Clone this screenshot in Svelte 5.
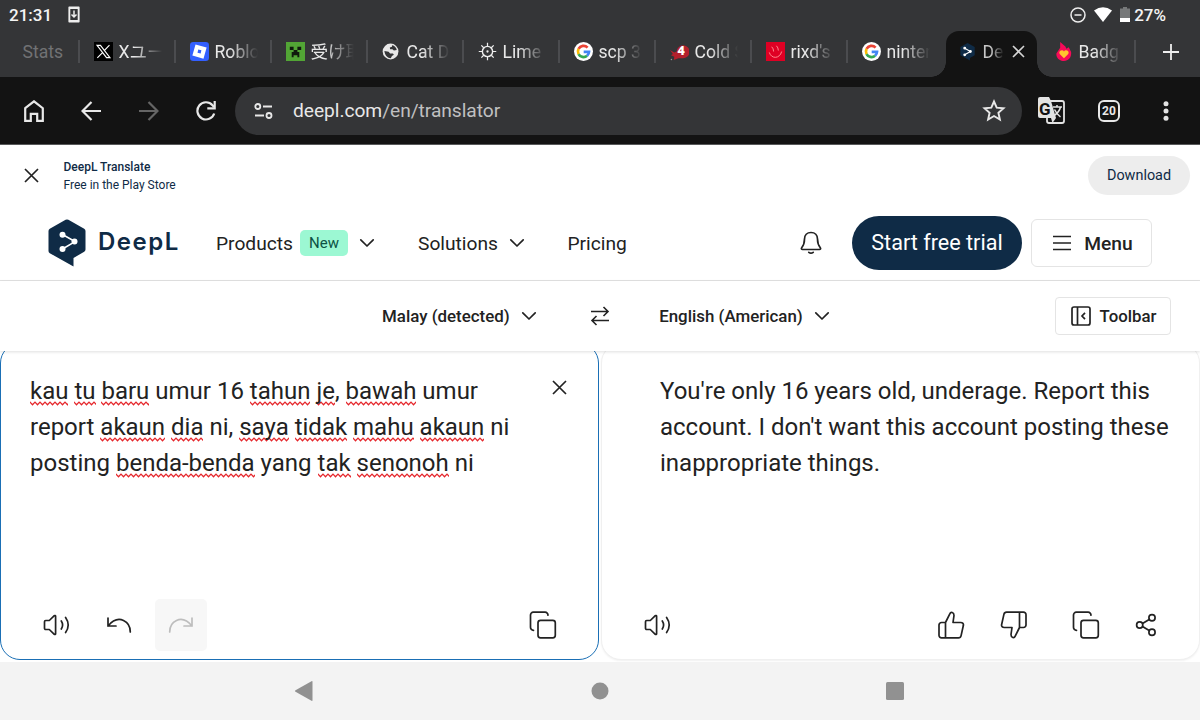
<script lang="ts">
	type Tab = { icon: string; label: string; active?: boolean };

	const tabs: Tab[] = [
		{ icon: "x", label: "Xユー" },
		{ icon: "roblox", label: "Roblo" },
		{ icon: "creeper", label: "受け取" },
		{ icon: "globe", label: "Cat D" },
		{ icon: "lime", label: "Lime" },
		{ icon: "google", label: "scp 3" },
		{ icon: "cold", label: "Cold S" },
		{ icon: "rixd", label: "rixd's" },
		{ icon: "google", label: "ninten" },
		{ icon: "deepl", label: "De", active: true },
		{ icon: "flame", label: "Badg" },
	];

	// odd entries are flagged by the spell checker
	const source: string[][] = [
		["", "kau", " ", "tu", " ", "baru", " umur 16 ", "tahun", " ", "je", ", ", "bawah", " umur"],
		["report ", "akaun", " ", "dia", " ni, ", "saya", " ", "tidak", " ", "mahu", " ", "akaun", " ni"],
		["posting ", "benda-benda", " yang ", "tak", " ", "senonoh", " ni"],
	];
	const translation = [
		"You're only 16 years old, underage. Report this",
		"account. I don't want this account posting these",
		"inappropriate things.",
	];
</script>

{#snippet favicon(name: string)}
	<svg class="favicon" viewBox="0 0 20 20">
		{#if name === "x"}
			<rect width="20" height="20" fill="#000" />
			<path d="M3.2 3.5h3.6l10 13h-3.6zM16.3 3.3l-5.8 6.1M9 11.2l-5.5 5.5" fill="none" stroke="#fff" stroke-width="1.2" />
		{:else if name === "roblox"}
			<rect width="20" height="20" rx="3.5" fill="#335fff" />
			<path d="M5.8 2.5l11.7 3.3-3.3 11.7-11.7-3.3zM8.7 8l-.8 3.3 3.3.8.8-3.3z" fill="#fff" fill-rule="evenodd" />
		{:else if name === "creeper"}
			<rect width="20" height="20" fill="#52a535" />
			<path d="M4 5h4v3.5H4zM12 5h4v3.5h-4zM8 8.5h4v2h2V16h-2v-2H8v2H6v-5.5h2z" fill="#101b0d" />
		{:else if name === "globe"}
			<circle cx="9" cy="10" r="8.3" fill="#e8e8e8" />
			<path d="M10.500 3.500c3 .5 4.500 2.500 5 5l-3 .5-1.500-1.500H8.500l-.3-1.800 2.300-.7zM2.500 9.500l4.500.7 1.500 2h3l1 1.300-2 1.200-1.300 2.500C6 17 3 14 2.500 9.500z" fill="#343537" />
		{:else if name === "lime"}
			<circle cx="10" cy="10" r="5.4" fill="none" stroke="#eee" stroke-width="1.5" />
			<circle cx="10" cy="10" r="1.2" fill="#eee" />
			<path d="M10 .8v4M10 15.200v4M.8 10h4M15.200 10h4M3.500 3.500l2.500 2.500M14 14l2.500 2.500M16.500 3.500L14 6M3.500 16.500L6 14" stroke="#eee" stroke-width="1.3" />
		{:else if name === "google"}
			<circle cx="10" cy="10" r="10" fill="#fff" />
			<g fill="none" stroke-width="2.9">
				<path d="M14.300 5.900A5.900 5.900 0 0 0 4.800 7.300" stroke="#ea4335" />
				<path d="M4.800 7.300a5.900 5.900 0 0 0 0 5.400" stroke="#fbbc05" />
				<path d="M4.800 12.700a5.900 5.900 0 0 0 9 1.800" stroke="#34a853" />
				<path d="M13.800 14.500A5.900 5.900 0 0 0 15.800 10.300H10.200" stroke="#4285f4" />
			</g>
		{:else if name === "cold"}
			<path d="M0 8.500l4.500 2.500 2.500-1a6.800 6.800 0 1 1 6 7L9 17l-5 2 .5-3.500L1 14l2-1.500z" fill="#b3202c" />
			<circle cx="1.500" cy="18.500" r=".8" fill="#999" />
			<text x="7.500" y="14" fill="#fff" font-size="14" font-weight="900">4</text>
		{:else if name === "rixd"}
			<rect width="20" height="20" fill="#df0024" />
			<path d="M6 5q2 2 2 5M11 4q2 2 2 5M3.500 11c2 7 11 7 13-1" fill="none" stroke="#ff8d91" stroke-width="1" />
		{:else if name === "deepl"}
			<path d="M9 1l7.500 4.300V14l-5 2.800v2.700L1.500 14V5.300z" fill="#0f2b46" />
			<path d="M6 6.500l6 3.500-6 3.500" fill="none" stroke="#fff" stroke-width="1.2" />
			<path d="M4.500 6.500a1.500 1.500 0 1 0 3 0 1.500 1.500 0 1 0-3 0M10.500 10a1.500 1.500 0 1 0 3 0 1.500 1.500 0 1 0-3 0M4.500 13.500a1.500 1.500 0 1 0 3 0 1.500 1.500 0 1 0-3 0" fill="#fff" />
		{:else}
			<path d="M6.500 0L12 4.800l1 2.200L15.500 5.500l2.500 5c.8 5.500-3 9.500-7.500 9.500S2 16.500 2.500 12L6.500 6z" fill="#f80a59" />
			<path d="M10.500 17L6 12.500a2.500 2.500 0 0 1 4.500-2.400A2.500 2.500 0 0 1 15 12.500z" fill="#ffc42e" />
		{/if}
	</svg>
{/snippet}

{#snippet chevron()}
	<svg class="chevron" width="16" height="10" viewBox="0 0 16 10"><path d="M1.800 1.800L8 8l6.200-6.200" /></svg>
{/snippet}

{#snippet speaker()}
	<svg width="28" height="28" viewBox="0 0 28 28">
		<path d="M2.700 9.500h3.600l5-4.800c.5-.4 1.300-.1 1.300.6v17.400c0 .7-.8 1-1.300.6l-5-4.800H2.700c-.7 0-1.200-.5-1.200-1.200v-6.600c0-.7.5-1.200 1.200-1.200M18.300 10q2.600 4 0 8M22.600 6.500q5.200 7.500 0 15" />
	</svg>
{/snippet}

{#snippet copy()}
	<svg width="28" height="28" viewBox="0 0 28 28">
		<rect x="9" y="9.300" width="17.300" height="17.500" rx="2.500" />
		<path d="M4.500 19.300a2.900 2.900 0 0 1-3-3V4a2.800 2.800 0 0 1 2.800-2.800h11.700a2.900 2.900 0 0 1 3 3" />
	</svg>
{/snippet}

{#snippet thumb()}
	<svg width="28" height="28" viewBox="0 0 28 28">
		<path d="M8.500 11.500v15.300H4.500a2.500 2.500 0 0 1-2.500-2.500V14a2.500 2.500 0 0 1 2.500-2.500h4L12.800 2.900c.9-2.400 4.200-1.900 4.200 1.600l-1 7h7.700c2 0 3 1.200 2.700 2.800l-2.300 10.300a2.800 2.800 0 0 1-2.700 2.200H8.500" />
	</svg>
{/snippet}

<div class="screen">
	<header class="browser">
		<div class="status">
			<span>21:31</span>
			<svg class="saver" width="12" height="17" viewBox="0 0 12 17">
				<path d="M1.200.5h9.600q.8 0 .8.8v14.400q0 .8-.8.8H1.200q-.8 0-.8-.8V1.300q0-.8.8-.8zM2.300 3v11h7.400V3z" fill="#eee" fill-rule="evenodd" />
				<path d="M6 4.500v6M3.500 8.500L6 11l2.500-2.500" fill="none" stroke="#eee" stroke-width="1.5" />
			</svg>
			<div class="status-right">
				<svg width="16" height="16" viewBox="0 0 16 16" fill="none" stroke="#eee" stroke-width="1.5"><circle cx="8" cy="8" r="7" /><path d="M4.5 8h7" /></svg>
				<svg width="18" height="15" viewBox="0 0 18 15"><path d="M0 3.500Q9-3 18 3.500L9 15z" fill="#fff" /></svg>
				<svg width="10" height="15" viewBox="0 0 10 15"><path d="M0 1.500h3V0h4v1.500h3V15H0z" fill="#77797a" /><path d="M0 11h10v4H0z" fill="#fff" /></svg>
				<span>27%</span>
			</div>
		</div>

		<div class="tabs">
			<div class="tab first"><span>Stats</span></div>
			{#each tabs as tab, i}
				<div class="tab" class:active={tab.active} class:bare={tab.active || i === tabs.length - 1}>
					{@render favicon(tab.icon)}
					<span class="label">{tab.label}</span>
					{#if tab.active}
						<svg class="tab-close" width="13" height="13" viewBox="0 0 13 13"><path d="M1 1l11 11M12 1L1 12" /></svg>
					{/if}
				</div>
			{/each}
			<div class="tab new">
				<svg width="16" height="16" viewBox="0 0 16 16"><path d="M8 0v16M0 8h16" stroke="#eee" stroke-width="1.8" /></svg>
			</div>
		</div>

		<div class="toolbar">
			<svg class="home" width="20" height="22" viewBox="0 0 20 22"><path d="M1.200 8.200L10 1.300l8.800 6.900v12.600h-5.600v-7H6.800v7H1.200z" /></svg>
			<svg class="back" width="20" height="20" viewBox="0 0 20 20"><path d="M20 10H1.500M10.500 1l-9 9 9 9" /></svg>
			<svg class="forward" width="20" height="20" viewBox="0 0 20 20"><path d="M0 10h18.500M9.500 1l9 9-9 9" /></svg>
			<svg class="reload" width="20" height="20" viewBox="0 0 20 20"><path d="M18.200 12.500A8.600 8.600 0 1 1 16.500 4.200L18 6" /><path d="M18.700 0v7.400h-7.400" /></svg>
			<div class="address">
				<svg class="tune" width="19" height="16" viewBox="0 0 19 16"><circle cx="3.800" cy="3.500" r="2.500" /><path d="M9 3.500h9M1 12.500h9" /><circle cx="15" cy="12.500" r="2.500" /></svg>
				<span class="url">deepl.com<span>/en/translator</span></span>
				<svg class="star" width="24" height="23" viewBox="0 0 24 23"><path d="M12 2.500l2.700 6.200 6.800.6-5.100 4.500 1.500 6.700-5.900-3.500-5.900 3.500 1.500-6.700-5.100-4.500 6.800-.6z" /></svg>
			</div>
			<svg class="gtranslate" width="27" height="27" viewBox="0 0 27 27">
				<rect x="9" y="4" width="17" height="22" rx="2" fill="none" stroke="#e3e3e3" stroke-width="1.8" />
				<path d="M2 0h9l2 4 5 17H2q-2 0-2-2V2q0-2 2-2z" fill="#e3e3e3" />
				<text x="1" y="17.500" font-size="17" font-weight="700" fill="#131313">G</text>
				<path d="M13 21h5l-3.500 5z" fill="#e3e3e3" />
				<path d="M15 10h9M19 8v2M22.500 10q-1 5-7 9M16.500 12.500q2 4.500 6 7.500" fill="none" stroke="#e3e3e3" stroke-width="1.5" />
			</svg>
			<div class="count">20</div>
			<svg class="dots" width="6" height="20" viewBox="0 0 6 20" fill="#e3e3e3"><circle cx="3" cy="2.700" r="2.500" /><circle cx="3" cy="10" r="2.500" /><circle cx="3" cy="17.300" r="2.500" /></svg>
		</div>
	</header>

	<div class="banner">
		<svg width="15" height="15" viewBox="0 0 15 15"><path d="M1 1l13 13M14 1L1 14" /></svg>
		<div class="app-info">
			<strong>DeepL Translate</strong>
			<span>Free in the Play Store</span>
		</div>
		<button class="download">Download</button>
	</div>

	<nav class="site-nav">
		<svg class="logo" width="38" height="48" viewBox="0 0 38 48">
			<path d="M17.600.8q1.400-.8 2.800 0l15.800 9q1.300.8 1.300 2.300v18.300q0 1.500-1.300 2.300L25.500 39v8.500L1.800 34.200Q.5 33.400.5 31.900V12.100q0-1.500 1.300-2.300z" fill="#0f2b46" />
			<path d="M14.500 15.500L27 22.600 14.500 30" fill="none" stroke="#fff" stroke-width="1.6" />
			<g fill="#fff"><circle cx="14.500" cy="15.800" r="3" /><circle cx="26.500" cy="22.600" r="3" /><circle cx="14.500" cy="30" r="3" /></g>
		</svg>
		<span class="wordmark">DeepL</span>
		<span class="link products">Products</span>
		<span class="badge">New</span>
		{@render chevron()}
		<span class="link solutions">Solutions</span>
		{@render chevron()}
		<span class="link pricing">Pricing</span>
		<svg class="bell" width="22" height="24" viewBox="0 0 22 24">
			<path d="M11 1.500c-4 0-6.500 2.800-6.500 6.500 0 4.500-1 6.500-2.800 8.700-.6.8-.2 1.800.8 1.800h17c1 0 1.400-1 .8-1.800-1.800-2.200-2.800-4.200-2.800-8.700 0-3.700-2.500-6.500-6.500-6.500zM8.800 21.300q2.200 1.800 4.400 0" />
		</svg>
		<button class="trial">Start free trial</button>
		<button class="menu">
			<svg width="18" height="16" viewBox="0 0 18 16"><path d="M0 1.500h18M0 8h18M0 14.500h18" /></svg>
			Menu
		</button>
	</nav>

	<div class="languages">
		<span class="lang">Malay (detected)</span>
		{@render chevron()}
		<svg class="swap" width="20" height="20" viewBox="0 0 20 20"><path d="M1 5.500h17M13.500 1L18 5.500 13.500 10M19 14.500H2M6.500 10L2 14.500 6.500 19" /></svg>
		<span class="lang">English (American)</span>
		{@render chevron()}
		<button class="panel-toggle">
			<svg width="20" height="20" viewBox="0 0 20 20"><rect x="1" y="1" width="18" height="18" rx="2" /><path d="M6.500 1v18M14 6.800L11 10l3 3.200" /></svg>
			Toolbar
		</button>
	</div>

	<main>
		<section class="panel source">
			<div class="text">
				{#each source as line}
					<p>{#each line as part, i}{#if i % 2}<span class="misspelt">{part}</span>{:else}{part}{/if}{/each}</p>
				{/each}
			</div>
			<svg class="clear" width="15" height="15" viewBox="0 0 15 15"><path d="M1 1l13 13M14 1L1 14" /></svg>
			<div class="actions">
				{@render speaker()}
				<svg class="undo" width="26" height="20" viewBox="0 0 26 20"><path d="M2 3v8h8M2 11C7 5 12 3 17.500 5.500 22 7.500 24.300 11 24.300 17" /></svg>
				<div class="redo">
					<svg width="26" height="20" viewBox="0 0 26 20"><path d="M24 3v8h-8M24 11C19 5 14 3 8.500 5.500 4 7.500 1.700 11 1.700 17" /></svg>
				</div>
				<div class="end">{@render copy()}</div>
			</div>
		</section>
		<section class="panel target">
			<div class="text">
				{#each translation as line}<p>{line}</p>{/each}
			</div>
			<div class="actions">
				{@render speaker()}
				<div class="end">
					{@render thumb()}
					<div class="down">{@render thumb()}</div>
					{@render copy()}
					<svg class="share" width="22" height="24" viewBox="0 0 22 24"><circle cx="4.700" cy="12" r="3.100" /><circle cx="17" cy="4.800" r="3.100" /><circle cx="17" cy="19.200" r="3.100" /><path d="M7.500 10.400l6.700-4M7.500 13.600l6.700 4" /></svg>
				</div>
			</div>
		</section>
	</main>

	<footer>
		<svg width="20" height="22" viewBox="0 0 20 22"><path d="M1.500 10.200L17.500 1.200q1-.5 1 .6v18.400q0 1.100-1 .6L1.500 11.800q-1.200-.8 0-1.600z" /></svg>
		<svg width="20" height="20" viewBox="0 0 20 20"><circle cx="10" cy="10" r="8.500" /></svg>
		<svg width="20" height="20" viewBox="0 0 20 20"><rect x="1" y="1" width="18" height="18" rx="1.5" /></svg>
	</footer>
</div>

<style>
	:global(body) {
		font-family: Roboto, "Noto Sans CJK JP", sans-serif;
		overflow: hidden;
	}
	.screen {
		width: 1200px;
		height: 720px;
		display: flex;
		flex-direction: column;
		background: #fff;
		color: #222;
	}
	svg {
		display: block;
		flex: none;
	}
	button {
		font-family: inherit;
		box-sizing: border-box;
		padding: 0;
		border: none;
		display: flex;
		align-items: center;
		justify-content: center;
		color: inherit;
		white-space: nowrap;
	}
	p {
		margin: 0;
	}

	/* browser chrome */
	.browser {
		height: 144px;
		flex: none;
		background: #343537;
		border-bottom: 1px solid #58595a;
		color: #e8e8e8;
	}
	.status {
		height: 31px;
		box-sizing: border-box;
		display: flex;
		align-items: center;
		padding: 0 34px 2px 9px;
		font-size: 17px;
		font-weight: 500;
		color: #f4f4f4;
	}
	.saver {
		margin-left: 16px;
	}
	.status-right {
		margin-left: auto;
		display: flex;
		align-items: center;
	}
	.status-right svg {
		margin-right: 8px;
	}
	.status-right svg + span {
		margin-left: -4px;
	}
	.tabs {
		height: 46px;
		display: flex;
	}
	.tab {
		width: 96px;
		box-sizing: border-box;
		display: flex;
		align-items: center;
		position: relative;
		flex: none;
		padding-left: 14px;
		padding-bottom: 5px;
		font-size: 17.6px;
	}
	.tab.first {
		width: 79.5px;
		padding-left: 22.5px;
		color: #717274;
	}
	.tab + .tab:not(.bare)::before {
		content: "";
		position: absolute;
		left: -2px;
		top: 9px;
		width: 2px;
		height: 23px;
		background: #4b4c4f;
	}
	.favicon {
		width: 19px;
		height: 19px;
		margin-right: 6px;
	}
	.label {
		width: 43px;
		overflow: hidden;
		white-space: nowrap;
		line-height: 24px;
		mask-image: linear-gradient(to right, #000 35%, transparent 100%);
	}
	.tab.active {
		width: 91px;
		margin: 0 4px 0 2px;
		padding-left: 13px;
		border-radius: 13px 13px 0 0;
		background: #131313;
	}
	.active + .tab {
		width: 95px;
		padding-left: 13px;
	}
	.active::before,
	.active::after {
		content: "";
		position: absolute;
		bottom: 0;
		width: 15px;
		height: 15px;
	}
	.active::before {
		left: -15px;
		background: radial-gradient(circle at 0 0, transparent 14.5px, #131313 15px);
	}
	.active::after {
		right: -15px;
		background: radial-gradient(circle at 100% 0, transparent 14.5px, #131313 15px);
	}
	.active .label {
		width: 21px;
		margin-left: -1px;
		color: #c8c8c8;
	}
	.tab-close {
		margin-left: 8px;
		fill: none;
		stroke: #d5d5d5;
		stroke-width: 1.6;
	}
	.tab.new {
		width: 64px;
		padding-left: 27px;
	}
	.toolbar {
		height: 67px;
		display: flex;
		align-items: center;
		background: #131313;
		padding-left: 24px;
		fill: none;
		stroke: #e8e8e8;
		stroke-width: 2.2;
	}
	.toolbar text {
		stroke: none;
	}
	.dots,
	.gtranslate {
		stroke: none;
	}
	.back {
		margin-left: 37px;
	}
	.forward {
		margin-left: 38px;
		stroke: #656565;
	}
	.reload {
		margin-left: 37px;
	}
	.address {
		width: 787px;
		height: 48px;
		margin-left: 19px;
		border-radius: 24px;
		background: #343537;
		display: flex;
		align-items: center;
	}
	.tune {
		margin-left: 19px;
		stroke-width: 1.8;
	}
	.url {
		margin-left: 20px;
		font-size: 19.2px;
		letter-spacing: -0.04px;
	}
	.url span {
		color: #c0c0c1;
	}
	.star {
		margin-left: auto;
		margin-right: 16px;
		stroke-width: 1.9;
	}
	.gtranslate {
		margin-left: 16px;
	}
	.count {
		width: 22px;
		height: 22px;
		box-sizing: border-box;
		margin-left: 33px;
		border: 2px solid #e8e8e8;
		border-radius: 6px;
		font-size: 12px;
		font-weight: 700;
		line-height: 18px;
		text-align: center;
	}
	.dots {
		margin-left: 43px;
	}

	/* app banner */
	.banner {
		height: 61px;
		flex: none;
		display: flex;
		align-items: center;
		padding: 0 10px 0 24px;
		color: #0f2b46;
	}
	.banner > svg,
	.clear {
		fill: none;
		stroke: #222;
		stroke-width: 1.7;
	}
	.app-info {
		margin-left: 24.5px;
		display: flex;
		flex-direction: column;
		font-size: 12px;
		line-height: 18px;
	}
	.app-info strong {
		font-weight: 500;
	}
	.download {
		width: 102px;
		height: 39px;
		margin-left: auto;
		padding-bottom: 1px;
		border-radius: 20px;
		background: #ededed;
		font-size: 14.4px;
	}

	/* site navigation */
	.site-nav {
		height: 75px;
		flex: none;
		display: flex;
		align-items: center;
		box-sizing: border-box;
		padding: 0 48px;
		border-bottom: 1px solid #e2e2e2;
	}
	.wordmark {
		margin-left: 12px;
		margin-top: -3px;
		width: 118px;
		font-family: Inter, sans-serif;
		font-size: 24px;
		font-weight: 600;
		letter-spacing: 1.5px;
		color: #0f2b46;
	}
	.logo {
		margin-top: -1px;
	}
	.link {
		font-size: 19.2px;
	}
	.products {
		margin-right: -1px;
	}
	.badge {
		width: 48px;
		height: 26px;
		margin: 0 11px 0 8px;
		border-radius: 5px;
		background: #9cf8d3;
		color: #0d5245;
		font-size: 15px;
		line-height: 26px;
		text-align: center;
	}
	.chevron {
		fill: none;
		stroke: #222;
		stroke-width: 1.7;
		stroke-linecap: round;
		stroke-linejoin: round;
	}
	.solutions {
		margin: 0 11.5px 0 43px;
	}
	.pricing {
		margin-left: 42px;
	}
	.bell {
		margin-left: auto;
		margin-right: 30px;
		fill: none;
		stroke: #222;
		stroke-width: 1.7;
		stroke-linecap: round;
	}
	.trial {
		width: 170px;
		height: 54px;
		padding-bottom: 2px;
		border-radius: 27px;
		background: #0f2b46;
		color: #fff;
		font-size: 21.6px;
	}
	.menu {
		width: 121px;
		height: 48px;
		margin-left: 9px;
		padding-left: 3px;
		gap: 13px;
		border: 1px solid #e4e4e4;
		border-radius: 6px;
		background: #fff;
		font-size: 19.2px;
		font-weight: 500;
	}
	.menu svg {
		stroke: #222;
		stroke-width: 1.6;
	}

	/* language bar */
	.languages {
		height: 70px;
		flex: none;
		box-sizing: border-box;
		display: flex;
		align-items: center;
		padding: 0 29px 0 382px;
		position: relative;
		box-shadow: 0 1px 3px rgba(0, 0, 0, 0.13);
		background: #fff;
		z-index: 1;
	}
	.lang {
		font-size: 16.9px;
		font-weight: 500;
		margin-right: 11.5px;
	}
	.swap {
		margin: 0 49px 0 53px;
		fill: none;
		stroke: #222;
		stroke-width: 1.6;
	}
	.panel-toggle {
		width: 116px;
		height: 38px;
		margin-left: auto;
		padding-left: 1px;
		gap: 9px;
		border: 1px solid #e4e4e4;
		border-radius: 4px;
		background: #fff;
		font-size: 16.8px;
		font-weight: 500;
	}
	.panel-toggle svg {
		fill: none;
		stroke: #222;
		stroke-width: 1.7;
	}

	/* translation panels */
	main {
		height: 311px;
		flex: none;
		display: flex;
		gap: 2px;
		overflow: hidden;
	}
	.panel {
		width: 599px;
		height: 317px;
		box-sizing: border-box;
		margin-top: -8px;
		display: flex;
		flex-wrap: wrap;
		position: relative;
		border: 1px solid #f0f0f0;
		border-radius: 20px;
		background: #fff;
		padding: 29px 28px 0 29px;
	}
	.source {
		border: 1.5px solid #1a6fb5;
	}
	.target {
		padding-left: 58px;
		padding-right: 0;
		box-shadow: 0 1px 2px rgba(0, 0, 0, 0.06);
	}
	.text {
		flex: 1;
		font-size: 24px;
		line-height: 36px;
		white-space: nowrap;
	}
	.misspelt {
		padding-bottom: 1px;
		background: url("data:image/svg+xml,%3Csvg xmlns='http://www.w3.org/2000/svg' width='5' height='5'%3E%3Cpath d='M-1.250 2.500L0 1.200L2.500 3.800L5 1.200L6.250 2.500' fill='none' stroke='%23e5252a' stroke-width='1.250'/%3E%3C/svg%3E") left bottom repeat-x;
	}
	.clear {
		margin: 7px 3px 0 0;
	}
	.actions {
		position: absolute;
		left: 41.5px;
		right: 42px;
		bottom: 8px;
		height: 52px;
		display: flex;
		align-items: center;
		fill: none;
		stroke: #222;
		stroke-width: 1.7;
		stroke-linecap: round;
		stroke-linejoin: round;
	}
	.source .actions {
		right: 41px;
	}
	.undo {
		margin-left: 35px;
	}
	.redo {
		width: 52px;
		height: 52px;
		margin-left: 23.5px;
		border-radius: 5px;
		background: #f7f7f7;
		stroke: #bdbdbd;
		display: grid;
		place-items: center;
	}
	.end {
		margin-left: auto;
		display: flex;
		align-items: center;
	}
	.down {
		margin: 0 44px 0 35px;
		transform: rotate(180deg);
	}
	.share {
		margin-left: 35px;
	}

	/* system buttons */
	footer {
		flex: 1;
		display: flex;
		align-items: center;
		justify-content: center;
		gap: 275.5px;
		padding-right: 1px;
		background: #f3f3f3;
		fill: #919191;
	}
</style>
